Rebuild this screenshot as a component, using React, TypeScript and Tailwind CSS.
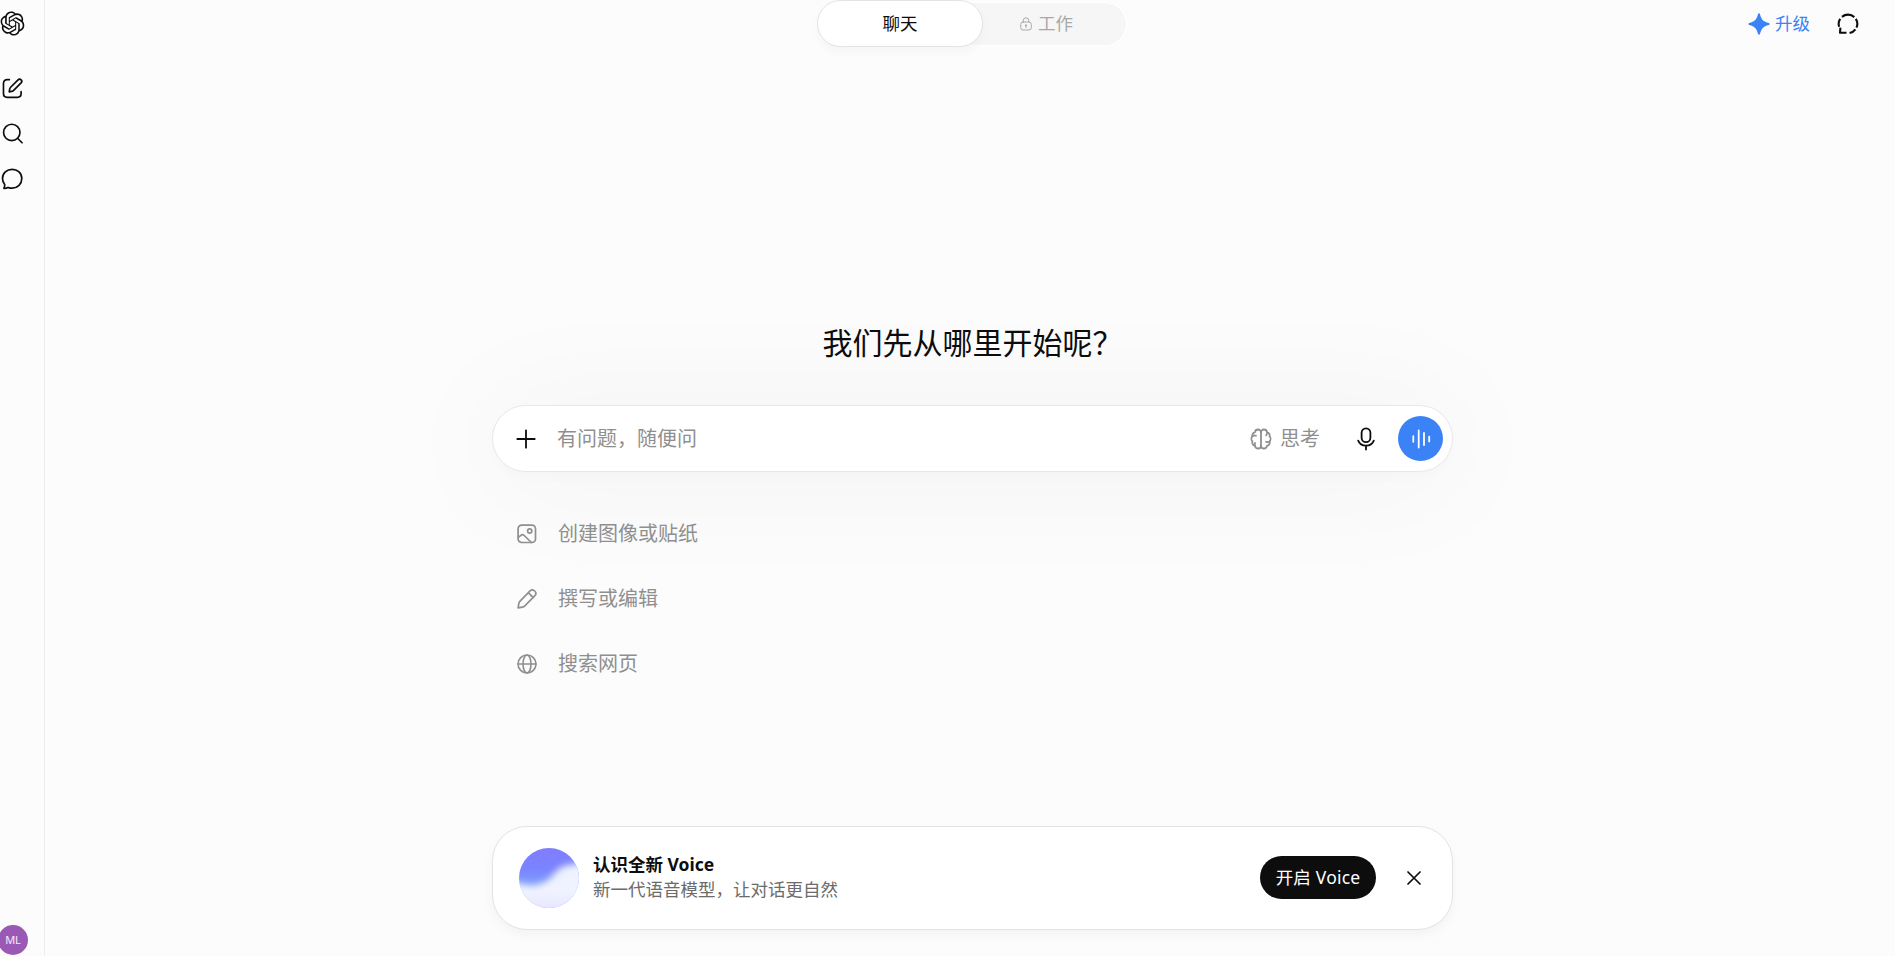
import type { ReactNode } from 'react';
import { RiOpenaiFill } from 'react-icons/ri';

interface IconProps {
  className?: string;
}

interface Suggestion {
  label: string;
  icon: ReactNode;
}

const strokeProps = {
  fill: 'none',
  stroke: 'currentColor',
  strokeLinecap: 'round' as const,
  strokeLinejoin: 'round' as const,
};

function ComposeIcon({ className }: IconProps) {
  return (
    <svg viewBox="0 0 20 20" className={className} {...strokeProps} strokeWidth="1.6">
      <path d="M7 1.6H5C2.8 1.6 1.4 3 1.4 5.2v9.6c0 2.2 1.4 3.6 3.6 3.6h9.6c2.2 0 3.6-1.4 3.6-3.6V13" />
      <path d="M8.2 8.8 15.3 1.7a2 2 0 0 1 2.9 2.9l-7.1 7.1c-.6.6-1.3 1-2.1 1.1l-2.1.4.3-2.1c.1-.9.4-1.7 1-2.3Z" />
    </svg>
  );
}

function SearchIcon({ className }: IconProps) {
  return (
    <svg viewBox="0 0 20 20" className={className} {...strokeProps} strokeWidth="1.6">
      <circle cx="9.3" cy="9" r="7.8" />
      <path d="m14.8 14.5 4.3 4.3" />
    </svg>
  );
}

function ChatIcon({ className }: IconProps) {
  return (
    <svg viewBox="0 0 22 22" className={className} {...strokeProps} strokeWidth="1.7">
      <path d="M11.2 1.3c-5.500 0-9.700 4-9.700 9.300 0 2.200.8 4.300 2.200 5.900.2 1.200-.1 2.600-.8 3.800 1.600.1 3-.2 4.200-.9 1.300.6 2.700.8 4.100.8 5.400 0 9.600-4.200 9.600-9.600s-4.200-9.300-9.600-9.300Z" />
    </svg>
  );
}

function TemporaryChatIcon({ className }: IconProps) {
  return (
    <svg viewBox="0 0 22 22" className={className} fill="none" stroke="currentColor" strokeWidth="2.1">
      <path d="M4.980 3.900A9.300 9.300 0 0 1 17.300 4.100" />
      <path d="M18.800 5.900A9.300 9.300 0 0 1 19.500 14.600" />
      <path d="M18.400 16.400A9.300 9.300 0 0 1 12.600 20" />
      <path d="M3.200 5.900A9.300 9.300 0 0 0 2.100 13.700" />
      <path d="M3.400 14.700 3 19.800h6.500" strokeLinejoin="round" />
    </svg>
  );
}

function SparkIcon({ className }: IconProps) {
  return (
    <svg viewBox="0 0 22 22" className={className} fill="currentColor">
      <path d="M11 .3c.5 0 .8.4 1 .9 1.500 5.500 3.300 7.300 8.800 8.800.5.200.9.500.9 1s-.4.800-.9 1c-5.500 1.500-7.300 3.300-8.800 8.800-.2.500-.5.900-1 .9s-.8-.4-1-.9c-1.500-5.500-3.300-7.300-8.800-8.800-.5-.2-.9-.5-.9-1s.4-.8.9-1c5.500-1.500 7.300-3.300 8.800-8.800.2-.5.5-.9 1-.9Z" />
    </svg>
  );
}

function LockIcon({ className }: IconProps) {
  return (
    <svg viewBox="0 0 12 14" className={className} {...strokeProps} strokeWidth="1">
      <rect x=".7" y="5" width="10.6" height="8" rx="2.4" />
      <path d="M3.200 5V3.600a2.800 2.800 0 0 1 5.600 0V5M6 8.800v1.800" />
      <circle cx="6" cy="8.300" r=".6" fill="currentColor" />
    </svg>
  );
}

function PlusIcon({ className }: IconProps) {
  return (
    <svg viewBox="0 0 20 20" className={className} {...strokeProps} strokeWidth="1.8">
      <path d="M10 1.300v17.400M1.300 10h17.400" />
    </svg>
  );
}

function BrainIcon({ className }: IconProps) {
  return (
    <svg viewBox="0 0 22 22" className={className} {...strokeProps} strokeWidth="1.8">
      <path d="M11 4.300v13.400" />
      <path d="M11 4.300C11 2.700 9.700 1.500 8.100 1.500 6.500 1.500 5.200 2.600 5 4.200 3 4.600 1.900 6.400 2.500 8.200 1.100 9.600 1.100 12 2.400 13.400c-.6 2.100.6 3.900 2.600 4.400.3 1.700 1.500 2.700 3.100 2.700 1.700 0 2.900-1.200 2.900-2.800" />
      <path d="M11 4.300c0-1.600 1.300-2.800 2.900-2.800s2.900 1.100 3.100 2.700c2 .4 3.100 2.200 2.500 4 1.400 1.400 1.400 3.800.1 5.200.6 2.100-.6 3.900-2.600 4.400-.3 1.700-1.500 2.700-3.100 2.700-1.700 0-2.900-1.200-2.900-2.800" />
      <path d="M2.600 8.200c1.100-.9 2.400-1 3.400-.5M5 17.500c-.5-1-.4-1.800.1-2.500M17 4.300c.4 1.400 0 2.500-1 3.100M19.500 13.400c-1.200.9-2.400 1-3.400.4" />
    </svg>
  );
}

function MicIcon({ className }: IconProps) {
  return (
    <svg viewBox="0 0 18 24" className={className} {...strokeProps} strokeWidth="1.8">
      <rect x="4.6" y="1.3" width="8.8" height="13.8" rx="4.4" />
      <path d="M1.200 13.600c1.200 3.100 4.200 5 7.800 5s6.600-1.900 7.800-5M9 18.600V22.600" />
    </svg>
  );
}

function VoiceIcon({ className }: IconProps) {
  return (
    <svg viewBox="0 0 20 20" className={className} {...strokeProps} strokeWidth="1.8">
      <path d="M2.300 7.200v5.600M7.700 1.400v17.200M13 4v12M18.200 7.600v4.800" />
    </svg>
  );
}

function ImageIcon({ className }: IconProps) {
  return (
    <svg viewBox="0 0 20 20" className={className} {...strokeProps} strokeWidth="1.7">
      <rect x="1.1" y="1.1" width="17.4" height="17.4" rx="3.6" />
      <circle cx="12.700" cy="7" r="2.100" />
      <path d="m1.300 13.400 2.600-2.100c1.100-.9 2.300-.8 3.300.2l7.200 7" />
    </svg>
  );
}

function PencilIcon({ className }: IconProps) {
  return (
    <svg viewBox="0 0 20 20" className={className} {...strokeProps} strokeWidth="1.7">
      <path d="M12.800 2.100c1.400-1.400 3.500-1.400 4.900-.1 1.400 1.400 1.400 3.500 0 4.900L7.800 16.800c-.7.700-1.500 1.100-2.500 1.300l-4.200.8.700-4.300c.1-1 .6-1.800 1.300-2.500ZM11.300 3.700l4.900 4.900" />
    </svg>
  );
}

function GlobeIcon({ className }: IconProps) {
  return (
    <svg viewBox="0 0 20 20" className={className} {...strokeProps} strokeWidth="1.6">
      <circle cx="10" cy="10" r="9" />
      <ellipse cx="10" cy="10" rx="4" ry="9" />
      <path d="M1 10h18" />
    </svg>
  );
}

function CloseIcon({ className }: IconProps) {
  return (
    <svg viewBox="0 0 14 14" className={className} {...strokeProps} strokeWidth="1.7">
      <path d="m1 1 12 12M13 1 1 13" />
    </svg>
  );
}

function VoiceOrb() {
  return (
    <svg viewBox="0 0 60 60" className="size-[60px] shrink-0">
      <defs>
        <linearGradient id="sky" x1="0" y1="0" x2="0" y2="1">
          <stop offset="0" stopColor="#7f7dff" />
          <stop offset=".35" stopColor="#7b84ff" />
          <stop offset=".7" stopColor="#80a8ff" />
        </linearGradient>
        <linearGradient id="cloud" x1="0" y1="0" x2="0" y2="1">
          <stop offset="0" stopColor="#eaf3ff" />
          <stop offset=".5" stopColor="#f1f3ff" />
          <stop offset="1" stopColor="#dcdcff" />
        </linearGradient>
        <filter id="soft" x="-30%" y="-30%" width="160%" height="160%">
          <feGaussianBlur stdDeviation="3.8" />
        </filter>
        <clipPath id="orb">
          <circle cx="30" cy="30" r="30" />
        </clipPath>
      </defs>
      <g clipPath="url(#orb)">
        <rect width="60" height="60" fill="url(#sky)" />
        <path
          d="M-15 34 4 36C12 39 20 37 26 34 32 31 34 26 39 22 44 17 50 17 56 16L80 12V68C60 76 0 76-15 70Z"
          fill="url(#cloud)"
          filter="url(#soft)"
        />
      </g>
    </svg>
  );
}

const suggestions: Suggestion[] = [
  { label: '创建图像或贴纸', icon: <ImageIcon className="size-5" /> },
  { label: '撰写或编辑', icon: <PencilIcon className="size-5" /> },
  { label: '搜索网页', icon: <GlobeIcon className="size-5" /> },
];

function Sidebar() {
  return (
    <aside className="flex w-[45px] shrink-0 flex-col items-start border-r border-[#ededed] pt-[9px]">
      <button className="-ml-[2px]">
        <RiOpenaiFill className="size-[29px]" />
      </button>
      <nav className="mt-[40px] flex flex-col gap-6 pl-[2px]">
        <button>
          <ComposeIcon className="size-[21px]" />
        </button>
        <button>
          <SearchIcon className="size-[21px]" />
        </button>
        <button className="-ml-px">
          <ChatIcon className="size-[22px]" />
        </button>
      </nav>
      <div className="mt-auto mb-px -ml-[2px] flex size-[30px] items-center justify-center rounded-full bg-[#9b59b6] text-[11px] text-white/90">
        ML
      </div>
    </aside>
  );
}

function Header() {
  return (
    <header className="flex h-[47px] items-start">
      <div className="ml-[772px] flex w-[309px] items-center">
        <button className="z-10 h-[47px] w-[166px] rounded-full border border-[#e3e3e3] bg-white pb-px text-[17.5px] shadow-[0_5px_10px_rgba(0,0,0,0.03)]">
          聊天
        </button>
        <button className="-ml-[30px] flex h-[42px] flex-1 items-center rounded-r-full bg-[#f6f6f6] pl-[67px] text-[17.5px] text-[#a8a8a8] ring-1 ring-white">
          <LockIcon className="mr-[6px] h-[14px] w-3" />
          工作
        </button>
      </div>
      <div className="mr-[36px] ml-auto flex h-[47px] items-center">
        <button className="flex items-center gap-[5px] text-[17.5px] text-[#3b82f6]">
          <SparkIcon className="size-[22px]" />
          升级
        </button>
        <button className="ml-[27px]">
          <TemporaryChatIcon className="size-[22px]" />
        </button>
      </div>
    </header>
  );
}

function Composer() {
  return (
    <div className="flex h-[67px] w-[961px] items-center rounded-full border border-[#e8e8e8] bg-white pr-[9px] pl-[23px] shadow-[0_5px_120px_15px_rgba(0,0,0,0.035),0_5px_15px_rgba(0,0,0,0.015)]">
      <button>
        <PlusIcon className="size-5" />
      </button>
      <span className="ml-[21px] text-xl text-[#8f8f8f]">有问题，随便问</span>
      <button className="ml-auto flex items-center gap-2 text-xl text-[#8f8f8f]">
        <BrainIcon className="size-[22px]" />
        思考
      </button>
      <button className="ml-[37px]">
        <MicIcon className="h-6 w-[18px]" />
      </button>
      <button className="ml-[23px] flex size-[45px] items-center justify-center rounded-full bg-[#3b82f6] text-white">
        <VoiceIcon className="size-5" />
      </button>
    </div>
  );
}

function VoiceBanner() {
  return (
    <div className="flex h-[104px] w-[961px] items-center rounded-[35px] border border-[#e3e3e3] bg-white pr-[31px] pl-[26px] shadow-[0_5px_12px_rgba(0,0,0,0.04)]">
      <VoiceOrb />
      <div className="-mt-[2px] ml-[14px] text-[17.5px] leading-[25px]">
        <p className="font-bold">认识全新 Voice</p>
        <p className="text-[#6b6b6b]">新一代语音模型，让对话更自然</p>
      </div>
      <button className="-mt-px ml-auto h-[43px] w-[116px] rounded-full bg-[#0d0d0d] text-[17.5px] tracking-[0.2px] text-white">
        开启 Voice
      </button>
      <button className="-mt-px ml-[31px]">
        <CloseIcon className="size-[14px]" />
      </button>
    </div>
  );
}

export default function App() {
  return (
    <div className="flex h-screen overflow-hidden bg-[#fcfcfc] font-['Noto_Sans','Noto_Sans_CJK_SC',sans-serif] text-[#0d0d0d]">
      <Sidebar />
      <div className="flex flex-1 flex-col">
        <Header />
        <main className="flex flex-1 flex-col items-center pb-[26px] pl-[5px]">
          <h1 className="mt-[273px] text-[30px] leading-[45px]">我们先从哪里开始呢？</h1>
          <div className="mt-[40px]">
            <Composer />
            <ul className="mt-[29px] flex flex-col pl-[25px]">
              {suggestions.map((item) => (
                <li key={item.label} className="flex h-[65px] items-center gap-[21px] text-xl text-[#8f8f8f]">
                  {item.icon}
                  {item.label}
                </li>
              ))}
            </ul>
          </div>
          <div className="mt-auto">
            <VoiceBanner />
          </div>
        </main>
      </div>
    </div>
  );
}
